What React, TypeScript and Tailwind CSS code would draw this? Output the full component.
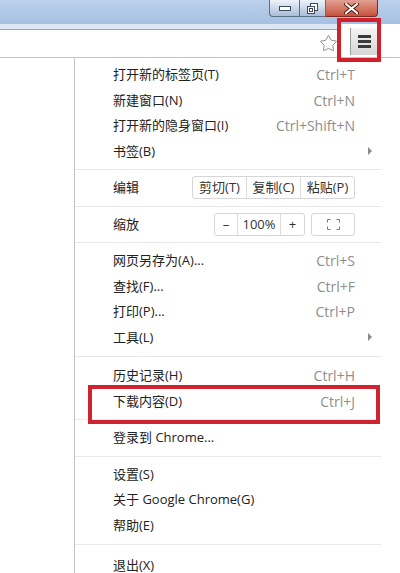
import { Star } from 'lucide-react';

type Item = { label: string; shortcut?: string; sub?: boolean };

const newGroup: Item[] = [
  { label: '打开新的标签页(T)', shortcut: 'Ctrl+T' },
  { label: '新建窗口(N)', shortcut: 'Ctrl+N' },
  { label: '打开新的隐身窗口(I)', shortcut: 'Ctrl+Shift+N' },
  { label: '书签(B)', sub: true },
];

const saveGroup: Item[] = [
  { label: '网页另存为(A)...', shortcut: 'Ctrl+S' },
  { label: '查找(F)...', shortcut: 'Ctrl+F' },
  { label: '打印(P)...', shortcut: 'Ctrl+P' },
  { label: '工具(L)', sub: true },
];

const historyGroup: Item[] = [
  { label: '历史记录(H)', shortcut: 'Ctrl+H' },
  { label: '下载内容(D)', shortcut: 'Ctrl+J' },
];

const settingsGroup: Item[] = [
  { label: '设置(S)' },
  { label: '关于 Google Chrome(G)' },
  { label: '帮助(E)' },
];

function Separator({ className = 'my-[5px]' }: { className?: string }) {
  return <div className={`h-px bg-[#e9e9e9] ${className}`} />;
}

function MenuItem({ item }: { item: Item }) {
  return (
    <div className="flex h-[25.5px] items-center pl-[38px] pr-[8px]">
      <span className="flex-1 text-[13px] text-[#222]">{item.label}</span>
      {item.shortcut && <span className="text-[14px] text-[#8e8e8e]">{item.shortcut}</span>}
      <span className="flex w-[18px] justify-end pr-[1px]">
        {item.sub && (
          <svg width="4" height="8" viewBox="0 0 4 8">
            <path d="M0 0 L4 4 L0 8 Z" fill="#8a8a8a" />
          </svg>
        )}
      </span>
    </div>
  );
}

function WindowButtons() {
  return (
    <div className="flex h-[17px] pr-[22px]">
      <div className="flex w-[31px] items-center justify-center rounded-bl-[4px] border border-t-0 border-[#5a6e88] bg-gradient-to-b from-[#eef3fa] to-[#a9bdd8]">
        <svg width="12" height="5" viewBox="0 0 12 5">
          <rect x="0.5" y="0.5" width="11" height="4" fill="#fff" stroke="#3c4a5c" />
        </svg>
      </div>
      <div className="flex w-[26px] items-center justify-center border border-l-0 border-t-0 border-[#5a6e88] bg-gradient-to-b from-[#eef3fa] to-[#a9bdd8]">
        <svg width="11" height="11" viewBox="0 0 11 11">
          <rect x="3.5" y="0.5" width="7" height="7" fill="#fff" stroke="#3c4a5c" />
          <rect x="0.5" y="3.5" width="7" height="7" fill="#fff" stroke="#3c4a5c" />
          <rect x="2.5" y="5.5" width="3" height="3" fill="none" stroke="#3c4a5c" />
        </svg>
      </div>
      <div className="flex w-[52px] items-center justify-center rounded-br-[4px] border border-l-0 border-t-0 border-[#7a2a1e] bg-gradient-to-b from-[#e2a092] to-[#c6503c]">
        <svg width="15" height="11" viewBox="0 0 15 11">
          <path d="M2 1 L13 10 M13 1 L2 10" stroke="#4a1a12" strokeWidth="4" strokeLinecap="round" />
          <path d="M2 1 L13 10 M13 1 L2 10" stroke="#fff" strokeWidth="2.2" strokeLinecap="round" />
        </svg>
      </div>
    </div>
  );
}

export default function App() {
  return (
    <div className="relative h-[573px] w-[400px] overflow-hidden bg-white font-['Open_Sans','Noto_Sans_CJK_SC',sans-serif]">
      {/* title bar */}
      <div className="flex h-[24px] justify-end bg-gradient-to-b from-[#bcd1eb] to-[#a6c0e2]">
        <WindowButtons />
      </div>

      {/* toolbar */}
      <div className="flex h-[34px] border-b border-[#c3c3c3] bg-[#dde7f3]">
        <div className="mt-[5px] flex w-[340px] items-center justify-end border-t border-[#9aa4b0] bg-white pr-[2px]">
          <Star size={19} strokeWidth={1.1} color="#7d7d7d" />
        </div>
        <div className="flex-1 bg-white pt-[4px]">
          <div className="ml-[10px] flex h-[27px] w-[27px] flex-col items-center justify-center gap-[2px] border-l border-[#9c9c9c] bg-gradient-to-b from-[#f4f4f4] to-[#d6d6d6]">
            <div className="h-[3px] w-[13px] bg-[#3a3a3a]" />
            <div className="h-[3px] w-[13px] bg-[#3a3a3a]" />
            <div className="h-[3px] w-[13px] bg-[#3a3a3a]" />
          </div>
        </div>
      </div>

      {/* dropdown menu */}
      <div className="absolute left-[74px] top-[58px] w-[307px] border-l border-[#c4c4c4] bg-white pt-[4px] pb-[8px]">
        {newGroup.map((it) => (
          <MenuItem key={it.label} item={it} />
        ))}
        <Separator />
        <div className="flex h-[25.5px] items-center pl-[38px] pr-[26px]">
          <span className="flex-1 text-[13px] text-[#222]">编辑</span>
          <div className="flex h-[23px] w-[163px] rounded-[3px] border border-[#d6d6d6] text-[13px] text-[#333]">
            <div className="flex flex-1 items-center justify-center border-r border-[#dcdcdc]">剪切(T)</div>
            <div className="flex flex-1 items-center justify-center border-r border-[#dcdcdc]">复制(C)</div>
            <div className="flex flex-1 items-center justify-center">粘贴(P)</div>
          </div>
        </div>
        <Separator />
        <div className="flex h-[25.5px] items-center pl-[38px] pr-[26px]">
          <span className="flex-1 text-[13px] text-[#222]">缩放</span>
          <div className="flex h-[23px] w-[91px] rounded-[3px] border border-[#d6d6d6] text-[13px] text-[#333]">
            <div className="flex w-[23px] items-center justify-center border-r border-[#dcdcdc]">–</div>
            <div className="flex flex-1 items-center justify-center border-r border-[#dcdcdc]">100%</div>
            <div className="flex w-[23px] items-center justify-center">+</div>
          </div>
          <div className="ml-[6px] flex h-[23px] w-[44px] items-center justify-center rounded-[3px] border border-[#d6d6d6]">
            <svg width="13" height="11" viewBox="0 0 13 11">
              <path d="M0.5 3.5 V0.5 H3.5 M9.5 0.5 H12.5 V3.5 M12.5 7.5 V10.5 H9.5 M3.5 10.5 H0.5 V7.5" fill="none" stroke="#7a7a7a" />
            </svg>
          </div>
        </div>
        <Separator />
        {saveGroup.map((it) => (
          <MenuItem key={it.label} item={it} />
        ))}
        <Separator className="mt-[6px] mb-[6px]" />
        {historyGroup.map((it) => (
          <MenuItem key={it.label} item={it} />
        ))}
        <Separator />
        <MenuItem item={{ label: '登录到 Chrome...' }} />
        <Separator />
        {settingsGroup.map((it) => (
          <MenuItem key={it.label} item={it} />
        ))}
        <Separator className="mt-[6px] mb-[8px]" />
        <MenuItem item={{ label: '退出(X)' }} />
      </div>

      {/* red highlight boxes */}
      <div className="absolute left-[337px] top-[18px] h-[44px] w-[44px] border-[4px] border-[#d0202c]" />
      <div className="absolute left-[88px] top-[385px] h-[39px] w-[292px] border-[4px] border-[#cf2430]" />
    </div>
  );
}
